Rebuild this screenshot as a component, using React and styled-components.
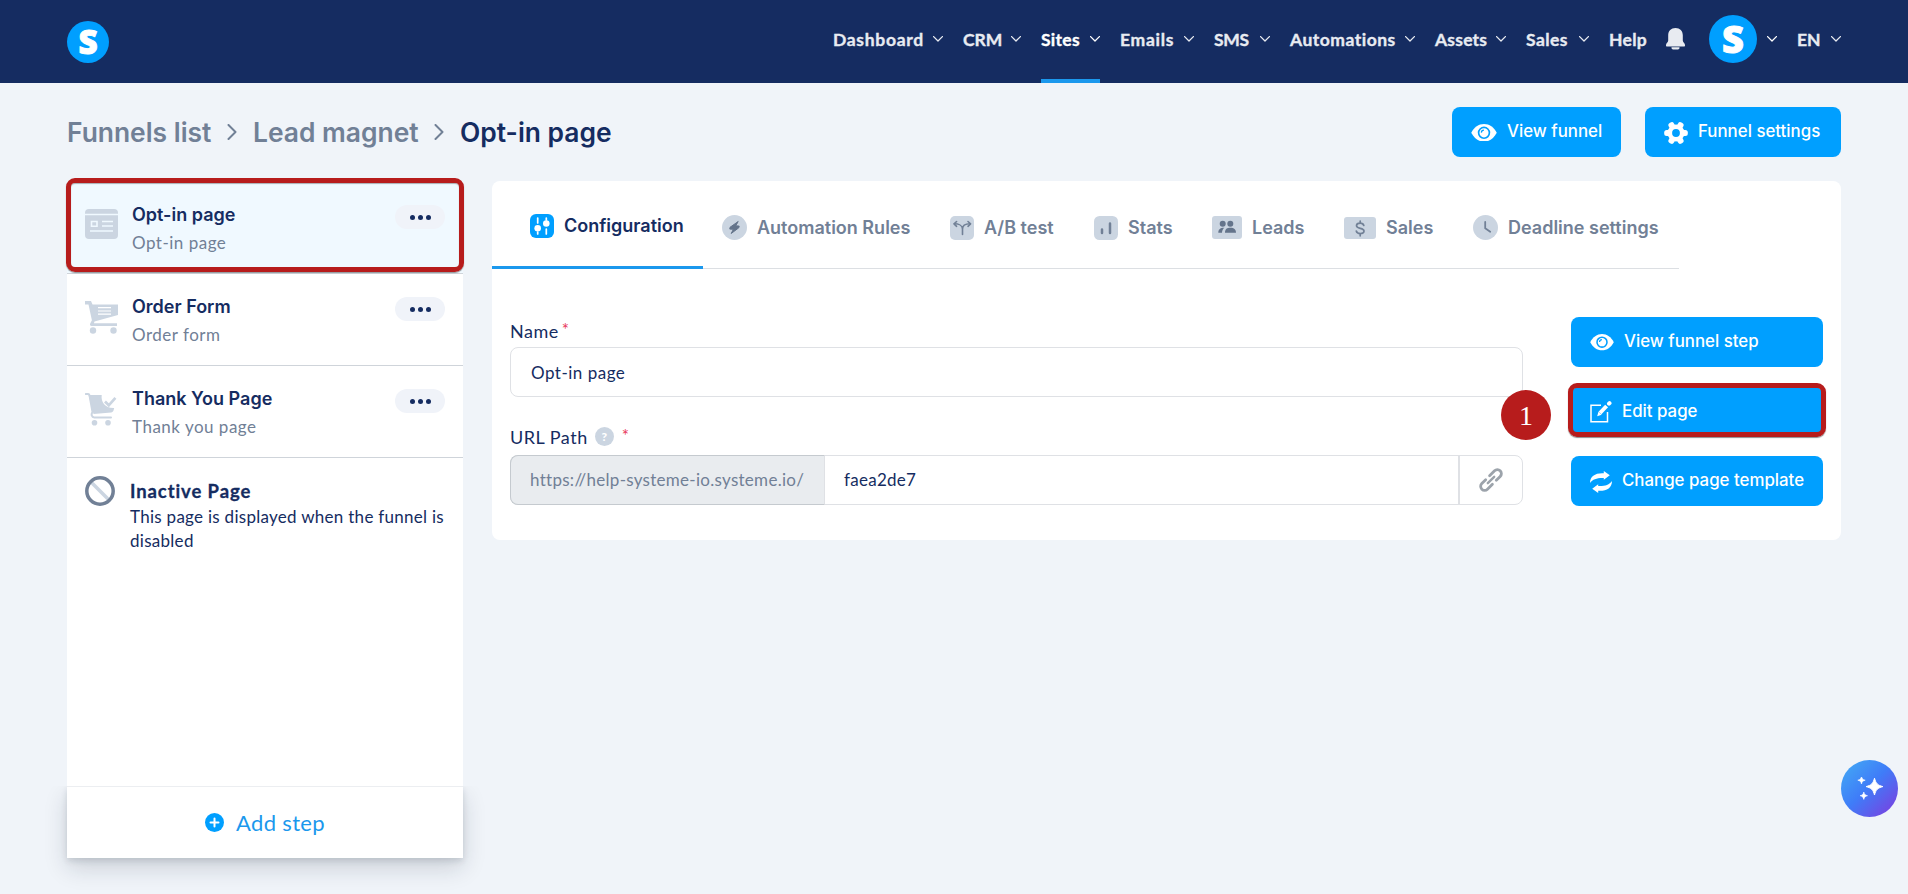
import React from "react";
import styled, { createGlobalStyle } from "styled-components";

const navItems = [
    { label: "Dashboard", width: 90, spacing: 0.7 },
    { label: "CRM", width: 38, spacing: 0 },
    { label: "Sites", width: 39, spacing: 0.3, active: true },
    { label: "Emails", width: 54, spacing: 0.7 },
    { label: "SMS", width: 36, spacing: -0.3 },
    { label: "Automations", width: 105, spacing: 0.5 },
    { label: "Assets", width: 51, spacing: 0.2 },
    { label: "Sales", width: 43, spacing: 0.4 },
];

const steps = [
    { title: "Opt-in page", type: "Opt-in page", icon: OptinIcon, active: true },
    { title: "Order Form", type: "Order form", icon: OrderIcon },
    { title: "Thank You Page", type: "Thank you page", icon: ThanksIcon },
];

const tabs = [
    { label: "Configuration", icon: ConfigIcon, width: 211, pad: 38, active: true },
    { label: "Automation Rules", icon: RulesIcon, width: 228, pad: 19 },
    { label: "A/B test", icon: SplitIcon, width: 144, pad: 19 },
    { label: "Stats", icon: StatsIcon, width: 118, pad: 19 },
    { label: "Leads", icon: LeadsIcon, width: 131, pad: 19 },
    { label: "Sales", icon: SalesIcon, width: 129, pad: 20 },
    { label: "Deadline settings", icon: ClockIcon, width: 226, pad: 20 },
];

export default function App() {
    return (
        <>
            <GlobalStyle />
            <Page>
                <Header />
                <Content>
                    <TopRow>
                        <Breadcrumb>
                            <Crumb $width={144}>Funnels list</Crumb>
                            <CrumbArrow />
                            <Crumb $width={165}>Lead magnet</Crumb>
                            <CrumbArrow />
                            <Crumb $current>Opt-in page</Crumb>
                        </Breadcrumb>
                        <Actions>
                            <Button $width={169}>
                                <EyeIcon size={26} />
                                <span>View funnel</span>
                            </Button>
                            <Button $width={196}>
                                <GearIcon />
                                <span>Funnel settings</span>
                            </Button>
                        </Actions>
                    </TopRow>
                    <Columns>
                        <Sidebar />
                        <StepPanel />
                    </Columns>
                </Content>
                <AssistantButton>
                    <SparklesIcon />
                </AssistantButton>
            </Page>
        </>
    );
}

function Header() {
    return (
        <StyledHeader>
            <Logo $size={42}><span>S</span></Logo>
            <Nav>
                {navItems.map((item) => (
                    <NavItem key={item.label} $active={item.active}>
                        <NavLabel $width={item.width} $spacing={item.spacing}>{item.label}</NavLabel>
                        <ChevronDown />
                    </NavItem>
                ))}
                <NavItem><NavLabel $width={37} $spacing={0.3}>Help</NavLabel></NavItem>
                <BellIcon />
                <UserMenu>
                    <Logo $size={48}><span>S</span></Logo>
                    <ChevronDown />
                </UserMenu>
                <NavItem><NavLabel $width={24} $spacing={0}>EN</NavLabel><ChevronDown /></NavItem>
            </Nav>
        </StyledHeader>
    );
}

function Sidebar() {
    return (
        <StyledSidebar>
            {steps.map(({ title, type, icon: Icon, active }) => (
                <Step key={title} $active={active}>
                    <Icon />
                    <div>
                        <h3>{title}</h3>
                        <p>{type}</p>
                    </div>
                    <MoreButton><i /><i /><i /></MoreButton>
                    {active && <StepOutline />}
                </Step>
            ))}
            <Inactive>
                <DisabledIcon />
                <div>
                    <h3>Inactive Page</h3>
                    <p>This page is displayed when the funnel is disabled</p>
                </div>
            </Inactive>
            <AddStep>
                <PlusIcon />
                <span>Add step</span>
            </AddStep>
        </StyledSidebar>
    );
}

function StepPanel() {
    return (
        <Panel>
            <Tabs>
                {tabs.map(({ label, icon: Icon, width, pad, active }) => (
                    <Tab key={label} $active={active} $width={width} $pad={pad}>
                        <Icon />
                        <span>{label}</span>
                    </Tab>
                ))}
            </Tabs>
            <PanelBody>
                <Form>
                    <Label $height={30} $bottom={4}>Name<Required>*</Required></Label>
                    <Input>Opt-in page</Input>
                    <Label $height={58} $bottom={6}>
                        URL Path
                        <HelpMark>?</HelpMark>
                        <Required>*</Required>
                    </Label>
                    <InputGroup>
                        <Addon>https://help-systeme-io.systeme.io/</Addon>
                        <PathValue>faea2de7</PathValue>
                        <CopyLink><LinkIcon /></CopyLink>
                    </InputGroup>
                </Form>
                <SideButtons>
                    <Button $width={252}>
                        <EyeIcon size={24} />
                        <span>View funnel step</span>
                    </Button>
                    <Button $width={252}>
                        <EditIcon />
                        <span>Edit page</span>
                        <ButtonOutline />
                        <Badge>1</Badge>
                    </Button>
                    <Button $width={252}>
                        <SyncIcon />
                        <span>Change page template</span>
                    </Button>
                </SideButtons>
            </PanelBody>
        </Panel>
    );
}

const GlobalStyle = createGlobalStyle`
    * {
        box-sizing: border-box;
    }
    body {
        margin: 0;
        background: #f0f4f9;
        color: #152c61;
        font-family: Lato, "Open Sans", sans-serif;
    }
    h3, p {
        margin: 0;
    }
    svg {
        display: block;
        flex: none;
    }
`;

const Page = styled.div`
    height: 894px;
    display: flex;
    flex-direction: column;
    overflow: hidden;
`;
const StyledHeader = styled.header`
    height: 83px;
    padding: 0 67px;
    background: #152c61;
    display: flex;
    align-items: center;
    justify-content: space-between;
    flex: none;
`;
const Logo = styled.div`
    width: ${({ $size }) => $size}px;
    height: ${({ $size }) => $size}px;
    border-radius: 50%;
    background: #009fff;
    color: #fff;
    display: flex;
    align-items: center;
    justify-content: center;
    flex: none;

    span {
        font: 800 ${({ $size }) => $size * 0.79}px/1 "Open Sans", sans-serif;
        -webkit-text-stroke: 1px #fff;
    }
`;
const Nav = styled.nav`
    height: 83px;
    display: flex;
    align-items: center;
    gap: 20px;
    padding-bottom: 5px;
`;
const NavItem = styled.div`
    height: 83px;
    margin-top: 5px;
    padding-bottom: 5px;
    display: flex;
    align-items: center;
    gap: 10px;
    color: ${({ $active }) => ($active ? "#fff" : "#e8ebf1")};
    box-shadow: ${({ $active }) => ($active ? "inset 0 -4px #1b98ed" : "none")};
`;
const NavLabel = styled.span`
    width: ${({ $width }) => $width}px;
    font-size: 17.5px;
    font-weight: 700;
    letter-spacing: ${({ $spacing }) => $spacing}px;
    -webkit-text-stroke: 0.35px currentColor;
    white-space: nowrap;
`;
const UserMenu = styled.div`
    display: flex;
    align-items: center;
    gap: 10px;
    color: #fff;
    margin-left: 4px;
`;

const Content = styled.main`
    padding: 24px 67px 0;
`;
const TopRow = styled.div`
    height: 50px;
    display: flex;
    justify-content: space-between;
    align-items: center;
`;
const Breadcrumb = styled.div`
    display: flex;
    align-items: center;
    gap: 16px;
`;
const Crumb = styled.span`
    width: ${({ $width }) => ($width ? `${$width}px` : "auto")};
    font-family: Inter, sans-serif;
    font-size: 26.4px;
    font-weight: 600;
    white-space: nowrap;
    color: ${({ $current }) => ($current ? "#152c61" : "#718096")};
`;
const Actions = styled.div`
    display: flex;
    gap: 24px;
`;
const Button = styled.div`
    position: relative;
    width: ${({ $width }) => $width}px;
    height: 50px;
    padding: 0 0 2px 19px;
    border-radius: 8px;
    background: #009fff;
    color: #fff;
    display: flex;
    align-items: center;
    gap: 10px;
    font: 500 16.85px/24px Inter, sans-serif;
    white-space: nowrap;

    > svg {
        margin-top: 3px;
    }
`;
const Columns = styled.div`
    display: flex;
    align-items: flex-start;
    gap: 29px;
    padding-top: 24px;
`;

const StyledSidebar = styled.aside`
    width: 396px;
    height: 677px;
    background: #fff;
    display: flex;
    flex-direction: column;
`;
const Step = styled.div`
    position: relative;
    height: ${({ $active }) => ($active ? 93 : 92)}px;
    padding: ${({ $active }) => ($active ? 23 : 22)}px 18px 0;
    border-bottom: 1px solid #cfd4da;
    background: ${({ $active }) => ($active ? "#f0f9ff" : "#fff")};
    display: flex;
    flex: none;
    gap: 14px;

    > svg {
        margin-top: 5px;
    }
    > div:nth-child(2) {
        flex: 1;
    }
    h3 {
        font: 600 18px/22px Inter, sans-serif;
    }
    p {
        margin-top: 5px;
        font-size: 17px;
        line-height: 24px;
        letter-spacing: 0.5px;
        color: #718096;
    }
`;
const StepOutline = styled.div`
    position: absolute;
    inset: -3px -1px 1px;
    border: 5px solid #b71c1c;
    border-radius: 9px;
    box-shadow: 0 1px 1px rgba(0, 0, 0, 0.4), inset 0 1px 1px rgba(0, 0, 0, 0.3);
`;
const MoreButton = styled.div`
    width: 50px;
    height: 24px;
    margin-top: 1px;
    border-radius: 12px;
    background: #f0f3f9;
    display: flex;
    align-items: center;
    justify-content: center;
    gap: 3px;

    i {
        width: 5px;
        height: 5px;
        border-radius: 50%;
        background: #152c61;
    }
`;
const Inactive = styled.div`
    display: flex;
    flex: 1;
    padding: 18px 10px 0 18px;
    gap: 15px;

    h3 {
        margin-top: 4px;
        font-size: 18.5px;
        line-height: 22px;
        font-weight: 700;
        letter-spacing: 0.9px;
        -webkit-text-stroke: 0.3px currentColor;
    }
    p {
        width: 325px;
        font-size: 17px;
        line-height: 24px;
        letter-spacing: 0.28px;
        margin-top: 3px;
    }
`;
const AddStep = styled.div`
    height: 72px;
    border-top: 1px solid #eceef1;
    box-shadow: 0 10px 22px rgba(20, 30, 50, 0.16), 0 3px 6px rgba(20, 30, 50, 0.12);
    clip-path: inset(0 -40px -40px);
    background: #fff;
    color: #1b98ed;
    display: flex;
    align-items: center;
    justify-content: center;
    gap: 12px;
    font-size: 22px;
    letter-spacing: 0.35px;
`;

const Panel = styled.section`
    width: 1349px;
    height: 359px;
    background: #fff;
    border-radius: 8px;
`;
const Tabs = styled.div`
    width: 1187px;
    height: 88px;
    display: flex;
    box-shadow: inset 0 -1px #dcdfe3;
`;
const Tab = styled.div`
    width: ${({ $width }) => $width}px;
    height: 88px;
    padding: 5px 0 0 ${({ $pad }) => $pad}px;
    display: flex;
    flex: none;
    align-items: center;
    gap: 10px;
    border-bottom: ${({ $active }) => ($active ? "3px solid #1b98ed" : "0")};
    color: ${({ $active }) => ($active ? "#152c61" : "#718096")};
    font: 600 18px/24px Inter, sans-serif;
    white-space: nowrap;
`;
const PanelBody = styled.div`
    display: flex;
    gap: 48px;
    padding: 48px 18px 0;
`;
const Form = styled.div`
    width: 1013px;
`;
const Label = styled.div`
    height: ${({ $height }) => $height}px;
    padding-bottom: ${({ $bottom }) => $bottom}px;
    display: flex;
    align-items: flex-end;
    font-size: 18px;
    line-height: 24px;
    letter-spacing: 0.5px;
`;
const Required = styled.span`
    color: #e8395b;
    font-size: 17px;
    margin-left: 3px;
    padding-bottom: 1px;
`;
const HelpMark = styled.span`
    width: 19px;
    height: 19px;
    border-radius: 50%;
    background: #cbd5e1;
    color: #fff;
    font-size: 12px;
    font-weight: 900;
    line-height: 19px;
    letter-spacing: 0;
    text-align: center;
    margin: 0 5px 3px 7px;
`;
const Input = styled.div`
    height: 50px;
    border: 1px solid #dfe1e5;
    border-radius: 8px;
    padding-left: 20px;
    font-size: 17px;
    line-height: 49px;
    letter-spacing: 0.5px;
`;
const InputGroup = styled.div`
    height: 50px;
    display: flex;
    border: 1px solid #dfe1e5;
    border-radius: 8px;
    font-size: 17px;
    line-height: 48px;
    letter-spacing: 0.28px;
`;
const Addon = styled.div`
    width: 315px;
    margin: -1px 0 -1px -1px;
    padding-left: 19px;
    border: 1px solid #c5cacf;
    border-right-color: #dfe1e5;
    border-radius: 8px 0 0 8px;
    background: #e9ecef;
    color: #718096;
`;
const PathValue = styled.div`
    flex: 1;
    padding-left: 19px;
`;
const CopyLink = styled.div`
    width: 64px;
    border-left: 2px solid #dfe1e5;
    display: flex;
    align-items: center;
    justify-content: center;
`;
const SideButtons = styled.div`
    display: flex;
    flex-direction: column;
    gap: 19.5px;
`;
const ButtonOutline = styled.div`
    position: absolute;
    inset: -4px -3px -0.5px;
    border: 5px solid #b71c1c;
    border-radius: 9px;
    box-shadow: 0 1px 1px rgba(0, 0, 0, 0.45);
`;
const Badge = styled.div`
    position: absolute;
    left: -70px;
    top: 3px;
    width: 50px;
    height: 50px;
    border-radius: 50%;
    background: #b71c1c;
    color: #fff;
    font: 28px/51px "Liberation Serif", serif;
    text-align: center;
`;
const AssistantButton = styled.div`
    position: fixed;
    right: 10px;
    bottom: 77px;
    width: 57px;
    height: 57px;
    border-radius: 50%;
    background: linear-gradient(135deg, #42a5f5 8%, #3f7cf8 48%, #7b3fe0 95%);
    display: flex;
    align-items: center;
    justify-content: center;
`;

// Icons
function ChevronDown() {
    return (
        <svg width="10" height="6" viewBox="0 0 10 6" fill="none" stroke="currentColor" strokeWidth="1.3">
            <path d="M.6.6 5 5 9.4.6" strokeLinecap="round" strokeLinejoin="round" />
        </svg>
    );
}

function CrumbArrow() {
    return (
        <svg width="10" height="16" viewBox="0 0 10 16" fill="none" stroke="#718096" strokeWidth="2">
            <path d="m1.5 1 7 7-7 7" strokeLinecap="round" strokeLinejoin="round" />
        </svg>
    );
}

function BellIcon() {
    return (
        <svg width="19" height="22" viewBox="0 0 19 22" fill="#e8ebf1">
            <path d="M9.500 0C5 0 2.200 3 2.200 7.200v5.300C2.200 14.500 0 15.300 0 17v.8c0 .4.300.7.700.7h17.600c.4 0 .7-.3.700-.7V17c0-1.700-2.200-2.500-2.200-4.500V7.200C16.800 3 14 0 9.500 0Z" />
            <path d="M5.500 19.300h8v.5c0 .9-.6 1.600-1.600 1.600H7.100c-1 0-1.600-.7-1.600-1.600z" />
        </svg>
    );
}

function EyeIcon({ size }) {
    return (
        <svg width={size} height={size * 0.68} viewBox="0 0 26 18">
            <path d="M0 9C3 3.300 7.500 0 13 0s10 3.300 13 9c-3 5.700-7.500 9-13 9S3 14.700 0 9Z" fill="#fff" />
            <circle cx="13" cy="9" r="5.500" fill="#fff" stroke="#009fff" strokeWidth="1.700" />
            <path d="M10.300 8.800a2.700 2.700 0 0 1 2.600-2.600" fill="none" stroke="#009fff" strokeWidth="1.300" />
        </svg>
    );
}

function GearIcon() {
    return (
        <svg width="24" height="24" viewBox="0 0 24 24" fill="#fff">
            <circle cx="12" cy="12" r="6.200" fill="none" stroke="#fff" strokeWidth="4.600" />
            {[0, 60, 120, 180, 240, 300].map((angle) => (
                <rect key={angle} x="17.500" y="9" width="6.300" height="6" rx="2.500" transform={`rotate(${angle} 12 12)`} />
            ))}
        </svg>
    );
}

function OptinIcon() {
    return (
        <svg width="33" height="30" viewBox="0 0 33 30">
            <rect width="33" height="30" rx="4" fill="#cbd5e1" />
            <path d="M0 5.500h33M17 12.500h11M17 17h11M5 22h23" stroke="#f0f9ff" strokeWidth="1.300" />
            <path d="M6.500 12.500h5.500v4.700H6.500z" fill="none" stroke="#f0f9ff" strokeWidth="1.600" />
        </svg>
    );
}

function OrderIcon() {
    return (
        <svg width="33" height="33" viewBox="0 0 33 33">
            <path d="M0 0h6l1.500 3.500H33V14L9.500 20.500l-.6 1.700H32V25H6.600c-1.300 0-2-1.100-1.500-2.200l1.800-3.600L3.500 3.500H0z" fill="#cbd5e1" />
            <path d="M13 6.700h13M13 10h13M13 13.200h13" stroke="#fff" strokeWidth="1.200" />
            <circle cx="8" cy="29.500" r="3.200" fill="#cbd5e1" />
            <circle cx="28.500" cy="29.500" r="3.200" fill="#cbd5e1" />
        </svg>
    );
}

function ThanksIcon() {
    return (
        <svg width="33" height="33" viewBox="0 0 33 33" fill="none" stroke="#cbd5e1">
            <path d="M3.500 2h13.200c-1 7.500 4 13.500 12.500 13l-.7 2.500c-.4 1.200-1.200 1.800-2.300 1.900L8.500 21z" fill="#cbd5e1" stroke="none" />
            <path d="M.8 1h2.300c.8 0 1.200.5 1.400 1.300l3 16.700c-1.600 2.300-.9 5.400 1.800 5.400H26" strokeWidth="2" strokeLinecap="round" />
            <path d="m20 8.500 3.800 3.800 6.600-7.500" strokeWidth="2.700" />
            <circle cx="9.500" cy="29.700" r="2.800" fill="#cbd5e1" stroke="none" />
            <circle cx="23" cy="29.700" r="2.800" fill="#cbd5e1" stroke="none" />
        </svg>
    );
}

function DisabledIcon() {
    return (
        <svg width="30" height="30" viewBox="0 0 30 30" fill="none">
            <path d="m6 6 18 18" stroke="#cbd5e1" strokeWidth="3.500" />
            <circle cx="15" cy="15" r="13.200" stroke="#718096" strokeWidth="3.500" />
        </svg>
    );
}

function PlusIcon() {
    return (
        <svg width="19" height="19" viewBox="0 0 19 19">
            <circle cx="9.500" cy="9.500" r="9.500" fill="#009fff" />
            <path d="M9.500 5.500v8M5.500 9.500h8" stroke="#fff" strokeWidth="2" strokeLinecap="round" />
        </svg>
    );
}

function ConfigIcon() {
    return (
        <svg width="24" height="24" viewBox="0 0 24 24" stroke="#fff" strokeWidth="1.700" strokeLinecap="round">
            <rect width="24" height="24" rx="6" fill="#009fff" stroke="none" />
            <path d="M7.700 4v5M7.700 18v2M16.300 4v2M16.300 15v5" />
            <circle cx="7.700" cy="14.300" r="3.300" fill="#fff" stroke="none" />
            <circle cx="16.300" cy="9.500" r="3.300" fill="#fff" stroke="none" />
        </svg>
    );
}

function RulesIcon() {
    return (
        <svg width="25" height="25" viewBox="0 0 25 25">
            <circle cx="12.500" cy="12.500" r="12.500" fill="#cbd5e1" />
            <path d="M16.200 6.500 8 12.300l-.2 1.800 3.600.2-2.200 4.200 7.600-5.700.4-1.700-3.500-.3 2.500-4.300z" fill="#64748b" stroke="#64748b" strokeLinejoin="round" />
        </svg>
    );
}

function SplitIcon() {
    return (
        <svg width="24" height="24" viewBox="0 0 24 24" fill="none" stroke="#718096" strokeWidth="1.600" strokeLinecap="round" strokeLinejoin="round">
            <rect width="24" height="24" rx="5" fill="#cbd5e1" stroke="none" />
            <path d="M12.500 18.500V13c0-3.500-4-5.200-8-5.200M12.500 13c0-3.500 3-5.200 7.500-5.200" />
            <path d="M6.600 5.500 4 7.800l2.600 2.500M18 5.500l2.600 2.300-2.600 2.500" />
        </svg>
    );
}

function StatsIcon() {
    return (
        <svg width="24" height="24" viewBox="0 0 24 24">
            <rect width="24" height="24" rx="5.500" fill="#cbd5e1" />
            <path d="M8 13.500v3.500M16 7.500V17" stroke="#718096" strokeWidth="2.500" strokeLinecap="round" />
        </svg>
    );
}

function LeadsIcon() {
    return (
        <svg width="30" height="23" viewBox="0 0 30 23" fill="#64748b">
            <rect width="30" height="23" rx="3" fill="#cbd5e1" />
            <circle cx="10.700" cy="7.800" r="3" />
            <circle cx="18.300" cy="7.800" r="3" />
            <path d="M13 16.700c0-3.700 2-5 5.500-5s5.500 1.500 5.500 5zM6.300 16.700c0-3 1.500-5 6-5-1.500 1.300-2.200 2.700-2.300 5z" />
        </svg>
    );
}

function SalesIcon() {
    return (
        <svg width="32" height="22" viewBox="0 0 32 22" fill="none" stroke="#718096" strokeWidth="1.700" strokeLinecap="round">
            <rect width="32" height="22" rx="3" fill="#cbd5e1" stroke="none" />
            <path d="M16.200 4v2M16.200 16.500v2.300M19.800 8.500c-.5-1.500-1.800-2.300-3.600-2.300-2.300 0-3.700 1-3.700 2.500 0 3.500 7.500 1.800 7.500 5.300 0 1.500-1.500 2.500-3.800 2.500-2 0-3.500-.9-3.900-2.500" />
        </svg>
    );
}

function ClockIcon() {
    return (
        <svg width="25" height="25" viewBox="0 0 25 25" fill="none">
            <circle cx="12.500" cy="12.500" r="12.500" fill="#cbd5e1" />
            <path d="M12.200 7v6.200l5 3.500" stroke="#718096" strokeWidth="1.800" strokeLinecap="round" strokeLinejoin="round" />
        </svg>
    );
}

function LinkIcon() {
    return (
        <svg width="26" height="26" viewBox="0 0 26 26" fill="none" stroke="#9ca3ab" strokeWidth="2.800" strokeLinecap="round">
            <g transform="rotate(-45 13 13)">
                <path d="M9.500 9H4a4 4 0 0 0 0 8h7M16.500 17H22a4 4 0 0 0 0-8h-7" />
                <path d="M8.500 13h9" strokeWidth="2.400" />
            </g>
        </svg>
    );
}

function EditIcon() {
    return (
        <svg width="22" height="22" viewBox="0 0 22 22" fill="none" stroke="#fff">
            <path d="M11 4.200H1v16.500h16.500V11" strokeWidth="1.500" />
            <path d="m10 12 6.600-7" strokeWidth="4" />
            <path d="m7.200 15.200 1.200-4.500 3.300 3z" fill="#fff" stroke="none" />
            <path d="m19 2.700.5-.5" strokeWidth="4" strokeLinecap="round" />
        </svg>
    );
}

function SyncIcon() {
    return (
        <svg width="22" height="22" viewBox="0 0 22 22" fill="#fff">
            <path d="M0 12C0 5 5.500 1.700 13.800 2.200V0l6 4.300-6 4.500V7C7.500 6.700 2.800 8 0 12Z" />
            <path d="M22 10c0 7-5.500 10.300-13.800 9.800V22l-6-4.300 6-4.500V15c6.300.3 11-1 13.800-5Z" />
        </svg>
    );
}

function SparklesIcon() {
    return (
        <svg width="26" height="24" viewBox="0 0 26 24" fill="#fff">
            <path d="M17.500 1.200c1.400 5.300 3.100 7 8.400 8.400-5.300 1.400-7 3.100-8.400 8.400-1.400-5.300-3.100-7-8.400-8.400 5.300-1.400 7-3.100 8.400-8.400Z" stroke="#fff" strokeLinejoin="round" />
            <path d="M4.500-.5c.6 2.400 1.300 3.100 3.700 3.700C5.800 3.800 5.100 4.500 4.500 7 3.900 4.500 3.200 3.800.8 3.200 3.200 2.600 3.900 1.900 4.500-.5ZM6.800 15c.6 2.400 1.300 3.100 3.700 3.700-2.400.6-3.100 1.300-3.700 3.700-.6-2.400-1.300-3.100-3.700-3.700 2.400-.6 3.100-1.300 3.700-3.700Z" stroke="#fff" strokeWidth=".6" />
        </svg>
    );
}
